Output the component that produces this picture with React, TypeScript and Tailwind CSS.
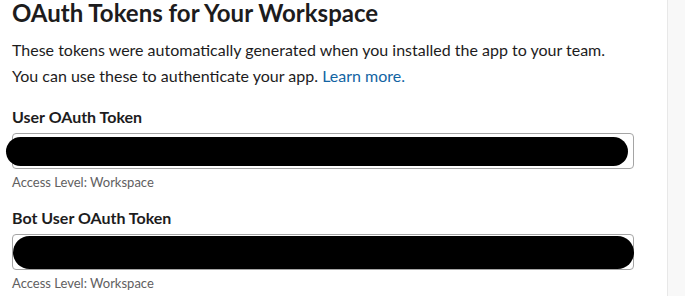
import React from "react";

const TokenField: React.FC<{ label: string; redact: string }> = ({ label, redact }) => (
  <div>
    <div className="mb-[5px] text-[16px] font-bold leading-[22px] text-[#1d1c1d]">{label}</div>
    <div className="relative h-[36px] w-[622px] rounded-[4px] border border-[#a5a5a5] bg-white">
      <div className={`absolute rounded-full bg-black ${redact}`} />
    </div>
    <div className="mt-[5px] text-[13px] leading-[16px] text-[#616061]">Access Level: Workspace</div>
  </div>
);

const App: React.FC = () => {
  return (
    <div
      className="flex h-[296px] w-[685px] overflow-hidden bg-white"
      style={{ fontFamily: "Lato, 'Noto Sans', sans-serif" }}
    >
      <main className="w-[667px] shrink-0 pl-[12px]">
        <h1 className="text-[24px] font-bold leading-[26px] text-[#1d1c1d]">
          OAuth Tokens for Your Workspace
        </h1>
        <p className="mt-[11px] text-[16px] leading-[26px] text-[#1d1c1d]">
          These tokens were automatically generated when you installed the app to your team.
          <br />
          You can use these to authenticate your app.{" "}
          <a href="#" className="text-[#1264a3]">
            Learn more.
          </a>
        </p>
        <div className="mt-[17px]">
          <TokenField label="User OAuth Token" redact="-left-[7px] top-[3px] h-[29px] w-[622px]" />
        </div>
        <div className="mt-[17px]">
          <TokenField label="Bot User OAuth Token" redact="left-0 top-[1px] h-[33px] w-[621px]" />
        </div>
      </main>
      <aside className="flex-1 border-l border-[#e8e8e8] bg-[#f8f8f8]" />
    </div>
  );
};

export default App;
